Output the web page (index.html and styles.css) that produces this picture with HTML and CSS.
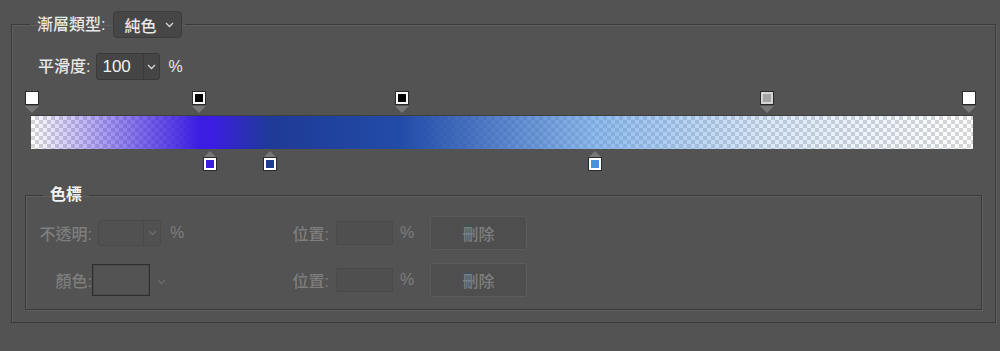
FILE: index.html
```html
<!DOCTYPE html>
<html lang="zh-Hant">

<head>
    <meta charset="UTF-8">
    <meta name="viewport" content="width=device-width, initial-scale=1.0">
    <title>漸層編輯器</title>
    <link rel="stylesheet" href="styles.css">
</head>

<body>
    <div class="panel">
        <fieldset class="group outer">
            <legend class="legend-main">
                <div class="legend-row">
                    <span class="label">漸層類型:</span>
                    <div class="select">
                        <span>純色</span>
                        <svg class="chev" width="9" height="6" viewBox="0 0 9 6"><polyline points="1,1 4.5,4.5 8,1" /></svg>
                    </div>
                </div>
            </legend>

            <div class="smooth-row">
                <span class="label">平滑度:</span>
                <div class="combo">
                    <span class="combo-value">100</span>
                    <span class="combo-arrow"><svg class="chev" width="9" height="6" viewBox="0 0 9 6"><polyline points="1,1 4.5,4.5 8,1" /></svg></span>
                </div>
                <span class="unit">%</span>
            </div>

            <div class="ramp">
                <div class="stops stops-top">
                    <div class="stop" style="left: 1px"><span class="swatch white"></span><span class="tri-down"></span></div>
                    <div class="stop" style="left: 168px"><span class="swatch black"></span><span class="tri-down"></span></div>
                    <div class="stop" style="left: 371px"><span class="swatch black"></span><span class="tri-down"></span></div>
                    <div class="stop" style="left: 736px"><span class="swatch gray"></span><span class="tri-down"></span></div>
                    <div class="stop" style="left: 938px"><span class="swatch white"></span><span class="tri-down"></span></div>
                </div>
                <div class="bar"></div>
                <div class="stops stops-bottom">
                    <div class="stop" style="left: 179px"><span class="tri-up"></span><span class="swatch" style="background: #3a1de0"></span></div>
                    <div class="stop" style="left: 239px"><span class="tri-up"></span><span class="swatch" style="background: #1e3a96"></span></div>
                    <div class="stop" style="left: 564px"><span class="tri-up"></span><span class="swatch" style="background: #4a90e2"></span></div>
                </div>
            </div>

            <fieldset class="group inner">
                <legend class="legend-sub"><span class="label strong">色標</span></legend>

                <div class="stop-row">
                    <div class="left-cell">
                        <span class="dim-label">不透明:</span>
                        <div class="combo dim">
                            <span class="combo-value"></span>
                            <span class="combo-arrow"><svg class="chev" width="9" height="6" viewBox="0 0 9 6"><polyline points="1,1 4.5,4.5 8,1" /></svg></span>
                        </div>
                        <span class="dim-unit">%</span>
                    </div>
                    <span class="pos-label">位置:</span>
                    <div class="pos-box"></div>
                    <span class="dim-unit pos-unit">%</span>
                    <button class="del-btn" disabled>刪除</button>
                </div>

                <div class="stop-row">
                    <div class="left-cell">
                        <span class="dim-label color-label">顏色:</span>
                        <div class="color-box"></div>
                        <svg class="chev dim-chev" width="9" height="6" viewBox="0 0 9 6"><polyline points="1,1 4.5,4.5 8,1" /></svg>
                    </div>
                    <span class="pos-label">位置:</span>
                    <div class="pos-box"></div>
                    <span class="dim-unit pos-unit">%</span>
                    <button class="del-btn" disabled>刪除</button>
                </div>
            </fieldset>
        </fieldset>
    </div>
</body>

</html>
```

FILE: styles.css
```css
*{
    box-sizing: border-box;
}

body{
    margin: 0;
    background-color: #535353;
    font-family: "Liberation Sans", "Noto Sans CJK TC", sans-serif;
    font-size: 16px;
    font-weight: 500;
    color: #e8e8e8;
}

.panel{
    padding: 11px 0 0 11px;
}

.group{
    margin: 0;
    padding: 0;
    min-inline-size: 0;
    border: 1px solid #3a3a3a;
    box-shadow: 1px 1px 0 #5f5f5f, inset 1px 1px 0 #5f5f5f;
}

.outer{
    width: 985px;
    padding-bottom: 12px;
}

.legend-main{
    margin-left: 18px;
    padding: 0 3px 0 7px;
}

.legend-row{
    display: flex;
    align-items: center;
    gap: 8px;
}

.label{
    line-height: 22px;
    white-space: nowrap;
}

.strong{
    font-weight: bold;
    color: #f2f2f2;
}

.chev{
    fill: none;
    stroke: #d8d8d8;
    stroke-width: 1.3;
}

.select{
    display: flex;
    align-items: center;
    justify-content: space-between;
    width: 69px;
    height: 27px;
    padding: 0 7px 0 10px;
    border: 1px solid #3c3c3c;
    border-radius: 4px;
    background-color: #464646;
}

.smooth-row{
    display: flex;
    align-items: center;
    height: 27px;
    margin-top: 15px;
    padding-left: 26px;
    gap: 6px;
}

.combo{
    display: flex;
    width: 64px;
    height: 27px;
    border: 1px solid #3a3a3a;
    border-radius: 3px;
    background-color: #454545;
}

.combo-value{
    width: 46px;
    padding-left: 5px;
    line-height: 25px;
    font-size: 17px;
    color: #f0f0f0;
}

.combo-arrow{
    display: flex;
    flex: 1;
    align-items: center;
    justify-content: center;
    border-left: 1px solid #3a3a3a;
}

.unit{
    margin-left: 2px;
}

/* gradient ramp */
.ramp{
    width: 942px;
    margin: 11px 0 0 19px;
}

.stops{
    position: relative;
}

.stops-top{
    height: 24px;
}

.stops-bottom{
    height: 22px;
}

.stop{
    position: absolute;
    top: 0;
    display: flex;
    flex-direction: column;
    align-items: center;
    transform: translateX(-50%);
}

.stops-bottom .stop{
    top: 2px;
}

.swatch{
    display: block;
    width: 14px;
    height: 14px;
    border: 1px solid #2a2a2a;
    box-shadow: inset 0 0 0 2px #ffffff;
}

.swatch.white{
    background-color: #ffffff;
}

.swatch.black{
    background-color: #000000;
}

.swatch.gray{
    background-color: #a4a4a4;
    box-shadow: inset 0 0 0 2px #d4d4d4;
}

.tri-down{
    width: 0;
    height: 0;
    margin-top: 1px;
    border-left: 7px solid transparent;
    border-right: 7px solid transparent;
    border-top: 7px solid #777777;
}

.tri-up{
    width: 0;
    height: 0;
    border-left: 6px solid transparent;
    border-right: 6px solid transparent;
    border-bottom: 6px solid #777777;
}

.bar{
    height: 34px;
    border-top: 1px solid #3e3e3e;
    background-image:
        linear-gradient(to right,
            rgba(58, 29, 224, 0) 0%,
            rgba(58, 29, 224, 1) 17.9%,
            rgb(60, 28, 228) 19%,
            rgb(30, 58, 150) 25.4%,
            rgb(34, 76, 168) 39.4%,
            rgba(74, 144, 226, 0.62) 59.9%,
            rgba(74, 144, 226, 0.2) 78.1%,
            rgba(74, 144, 226, 0) 99.6%),
        conic-gradient(#d6d6d6 25%, #ffffff 0 50%, #d6d6d6 0 75%, #ffffff 0);
    background-size: 100% 100%, 8px 8px;
}

/* colour stop section */
.inner{
    margin: 13px 13px 0 13px;
    padding: 10px 0 12px 0;
}

.legend-sub{
    margin-left: 17px;
    padding: 0 7px;
}

.stop-row{
    display: flex;
    align-items: center;
    height: 34px;
    color: #7e7e7e;
}

.stop-row + .stop-row{
    margin-top: 13px;
}

.left-cell{
    display: flex;
    align-items: center;
    width: 259px;
}

.dim-label{
    width: 66px;
    text-align: right;
    white-space: nowrap;
}

.combo.dim{
    width: 63px;
    height: 26px;
    margin-left: 6px;
    border-color: #4a4a4a;
    background-color: #515151;
}

.combo.dim .combo-value{
    width: 44px;
}

.combo.dim .combo-arrow{
    border-left-color: #4a4a4a;
}

.combo.dim .chev,
.dim-chev{
    stroke: #6c6c6c;
}

.dim-unit{
    width: 13px;
    margin-left: 9px;
}

.color-box{
    width: 58px;
    height: 32px;
    border: 1px solid #2e2e2e;
    box-shadow: inset 0 0 0 1px #4a4a4a;
    background-color: #535353;
}

.dim-chev{
    margin: 4px 0 0 7px;
}

.pos-label{
    width: 44px;
    text-align: right;
    white-space: nowrap;
}

.pos-box{
    width: 57px;
    height: 24px;
    margin-left: 7px;
    border: 1px solid #4a4a4a;
    background-color: #4f4f4f;
}

.pos-unit{
    margin-left: 7px;
}

.del-btn{
    width: 97px;
    height: 34px;
    margin-left: 17px;
    border: 1px solid #5b5b5b;
    border-radius: 3px;
    background-color: #4e4e4e;
    color: #7e7e7e;
    font-family: "Liberation Sans", "Noto Sans CJK TC", sans-serif;
    font-size: 16px;
    font-weight: 500;
}
```
